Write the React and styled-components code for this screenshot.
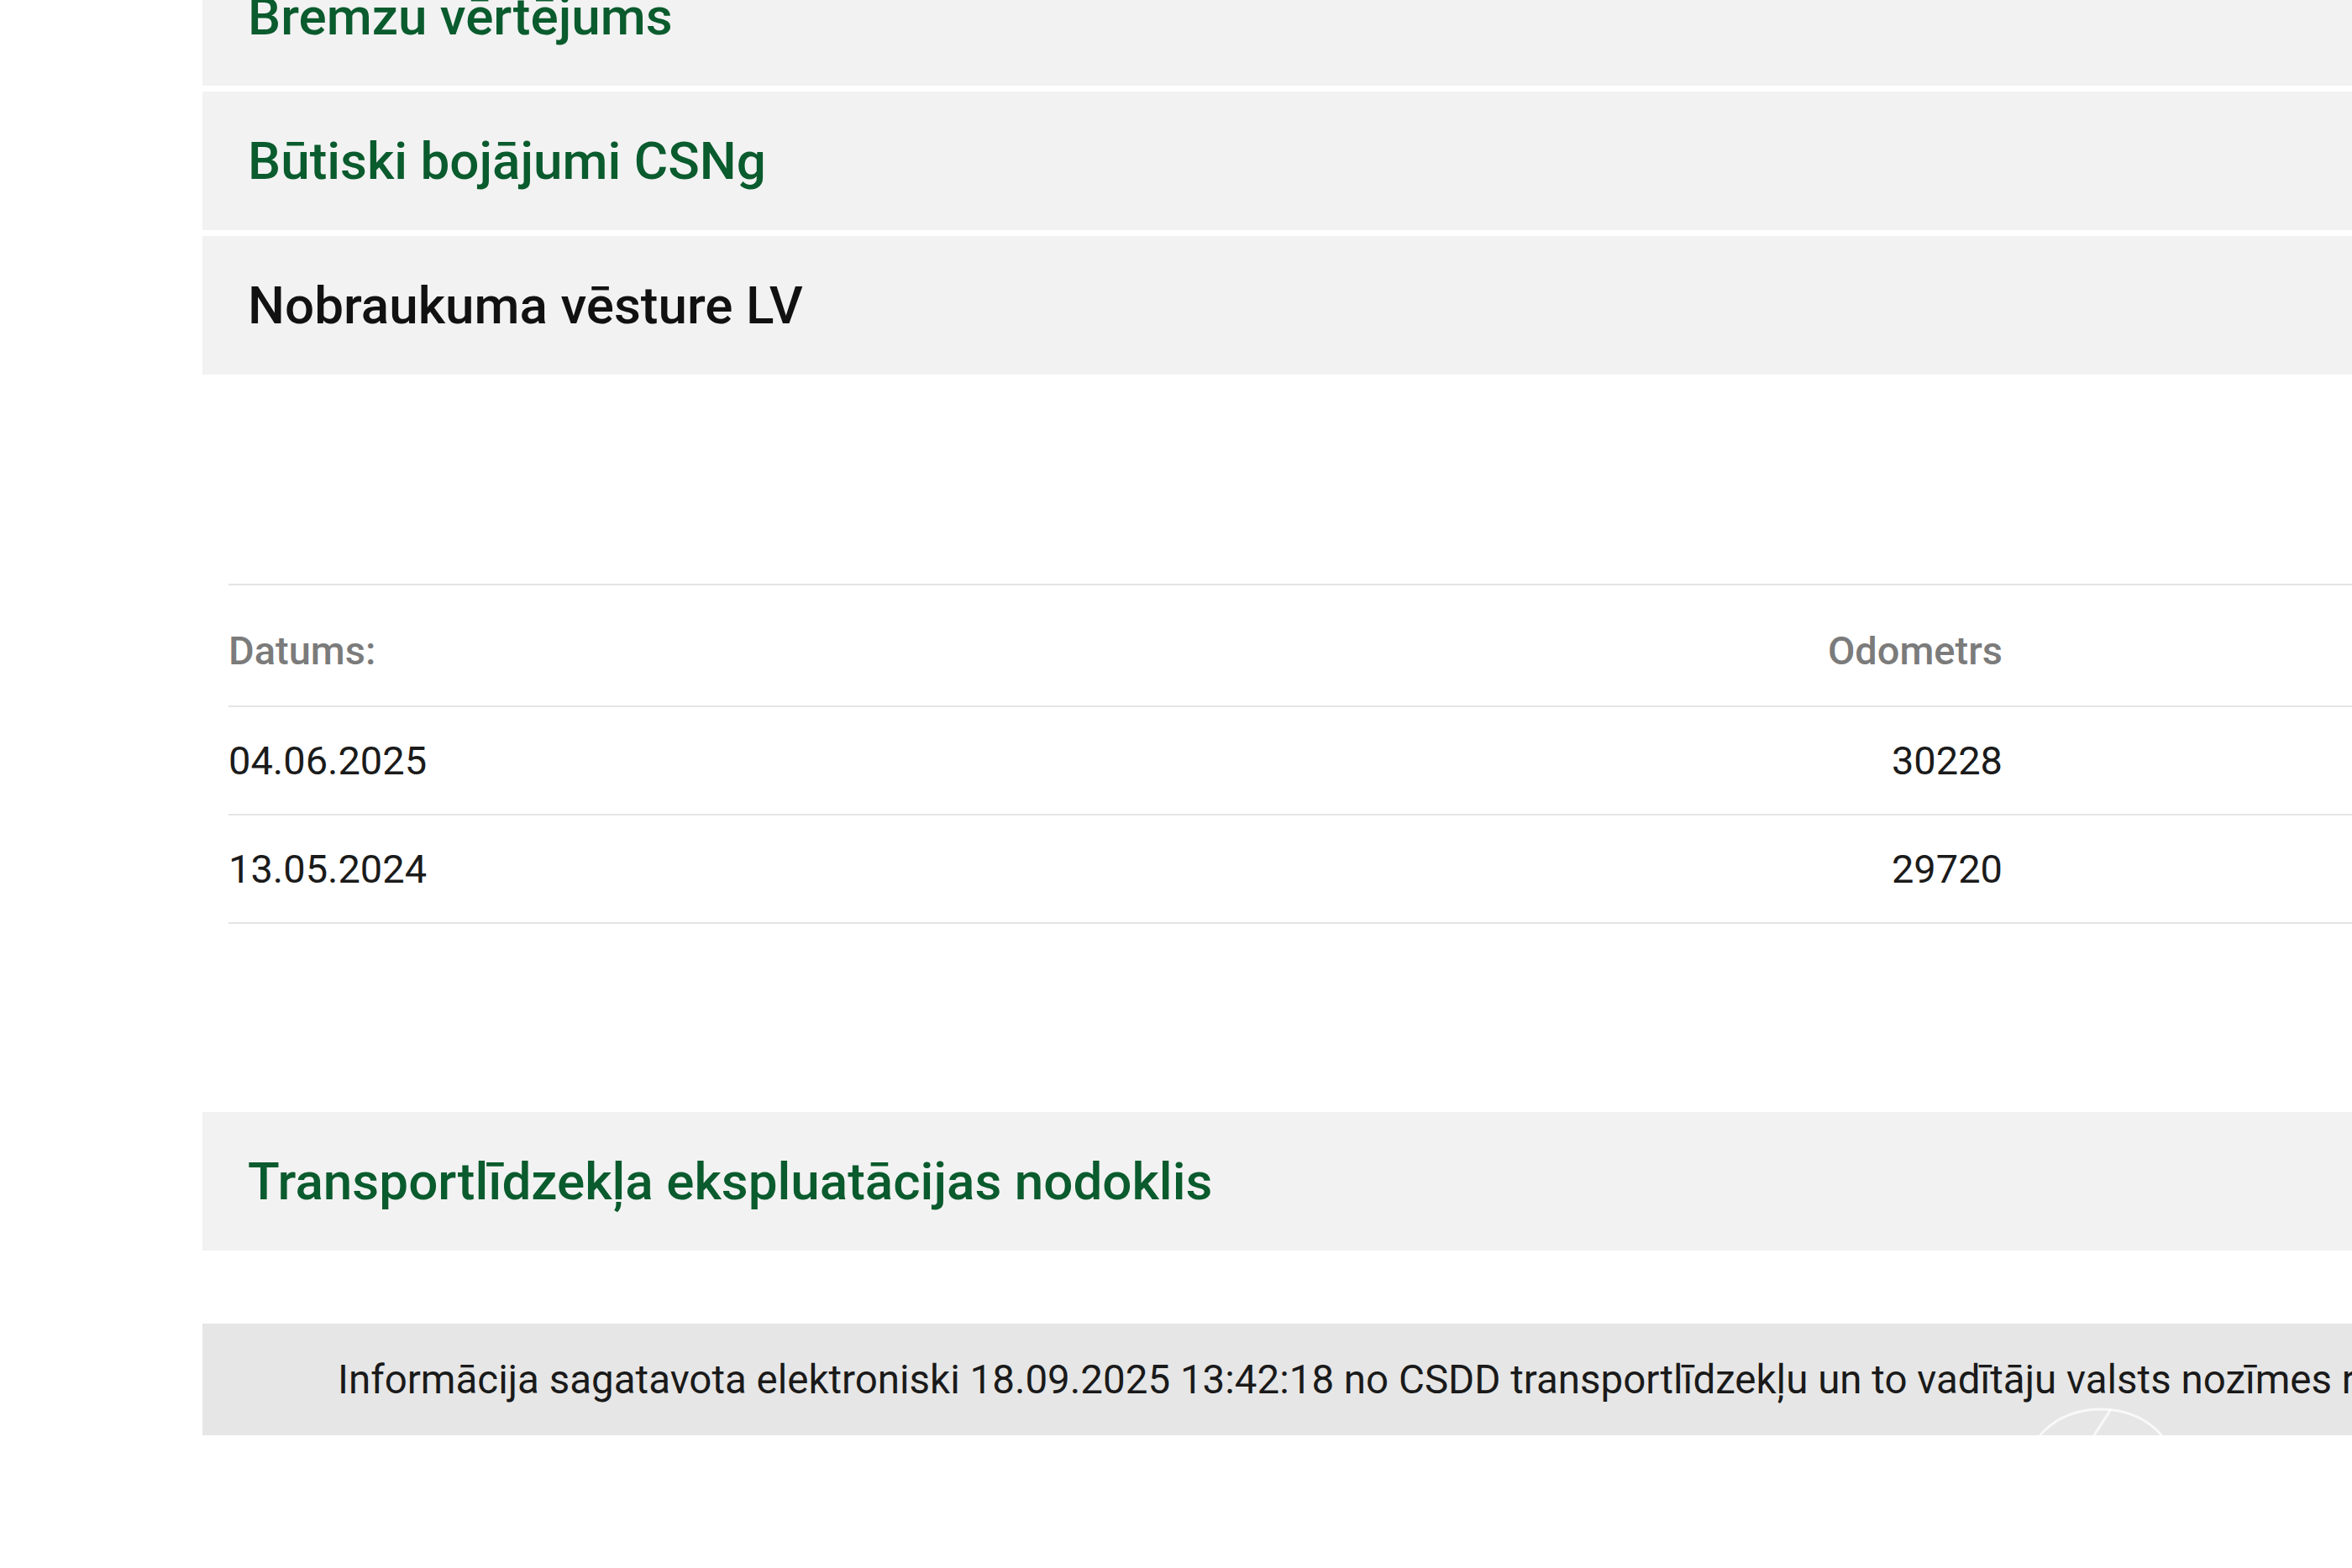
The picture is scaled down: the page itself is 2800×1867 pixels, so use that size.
import styled, { createGlobalStyle } from "styled-components";

const GlobalStyle = createGlobalStyle`
  html, body {
    margin: 0;
    padding: 0;
    background: #ffffff;
    overflow: hidden;
  }
  body {
    font-family: Roboto, "Liberation Sans", Arial, sans-serif;
  }
`;

const Page = styled.div`
  width: 2800px;
  height: 1867px;
  overflow: hidden;
  padding-left: 241px;
  box-sizing: border-box;
`;

const Content = styled.div`
  width: 2800px;
  margin-top: -63px;
  display: flex;
  flex-direction: column;
`;

const Accordion = styled.div`
  display: flex;
  flex-direction: column;
  gap: 7px;
`;

const Panel = styled.div`
  height: 165px;
  background: #f2f2f2;
  display: flex;
  align-items: center;
  padding: 0 54px;
  box-sizing: border-box;

  h2 {
    margin: 0;
    font-size: 62px;
    font-weight: 500;
    color: ${(p) => (p.$open ? "#111111" : "#0a5b2d")};
  }
`;

const MileageTable = styled.div`
  margin: 249px 0 0 31px;
  display: grid;
  grid-template-columns: 1800px 312px 1fr;
  border-top: 2px solid #e4e4e4;
`;

const Row = styled.div`
  display: contents;

  & > div {
    height: ${(p) => (p.$head ? "145px" : "129px")};
    border-bottom: 2px solid #e4e4e4;
    display: flex;
    align-items: center;
    padding-top: ${(p) => (p.$head ? "12px" : "0")};
    box-sizing: border-box;
    font-size: 47px;
    font-weight: ${(p) => (p.$head ? 500 : 400)};
    color: ${(p) => (p.$head ? "#7b7b7b" : "#1b1b1b")};
  }
`;

const Cell = styled.div`
  justify-content: ${(p) => (p.$right ? "flex-end" : "flex-start")};
`;

const TaxPanel = styled(Panel)`
  margin-top: 224px;
`;

const Footer = styled.div`
  position: relative;
  overflow: hidden;
  margin-top: 87px;
  height: 133px;
  background: #e6e6e6;
  display: flex;
  align-items: center;
  padding-left: 161px;
  box-sizing: border-box;

  p {
    margin: 0;
    white-space: nowrap;
    font-size: 47.5px;
    color: #1a1a1a;
  }
`;

const Watermark = styled.svg`
  position: absolute;
  left: 2168px;
  top: 96px;
  width: 190px;
  height: 60px;
`;

const rows = [
  { date: "04.06.2025", odo: "30228" },
  { date: "13.05.2024", odo: "29720" },
];

export default function App() {
  return (
    <>
      <GlobalStyle />
      <Page>
        <Content>
          <Accordion>
            <Panel>
              <h2>Bremzu vērtējums</h2>
            </Panel>
            <Panel>
              <h2>Būtiski bojājumi CSNg</h2>
            </Panel>
            <Panel $open>
              <h2>Nobraukuma vēsture LV</h2>
            </Panel>
          </Accordion>

          <MileageTable>
            <Row $head>
              <Cell>Datums:</Cell>
              <Cell $right>Odometrs</Cell>
              <Cell />
            </Row>
            {rows.map((r) => (
              <Row key={r.date}>
                <Cell>{r.date}</Cell>
                <Cell $right>{r.odo}</Cell>
                <Cell />
              </Row>
            ))}
          </MileageTable>

          <TaxPanel>
            <h2>Transportlīdzekļa ekspluatācijas nodoklis</h2>
          </TaxPanel>

          <Footer>
            <p>
              Informācija sagatavota elektroniski 18.09.2025 13:42:18 no CSDD
              transportlīdzekļu un to vadītāju valsts nozīmes reģistra
            </p>
            <Watermark viewBox="0 0 190 60">
              <ellipse
                cx="92"
                cy="74"
                rx="86"
                ry="68"
                fill="none"
                stroke="#ffffff"
                strokeWidth="3"
                opacity="0.75"
              />
              <path
                d="M104 6 L82 40"
                stroke="#ffffff"
                strokeWidth="3"
                opacity="0.75"
              />
            </Watermark>
          </Footer>
        </Content>
      </Page>
    </>
  );
}
